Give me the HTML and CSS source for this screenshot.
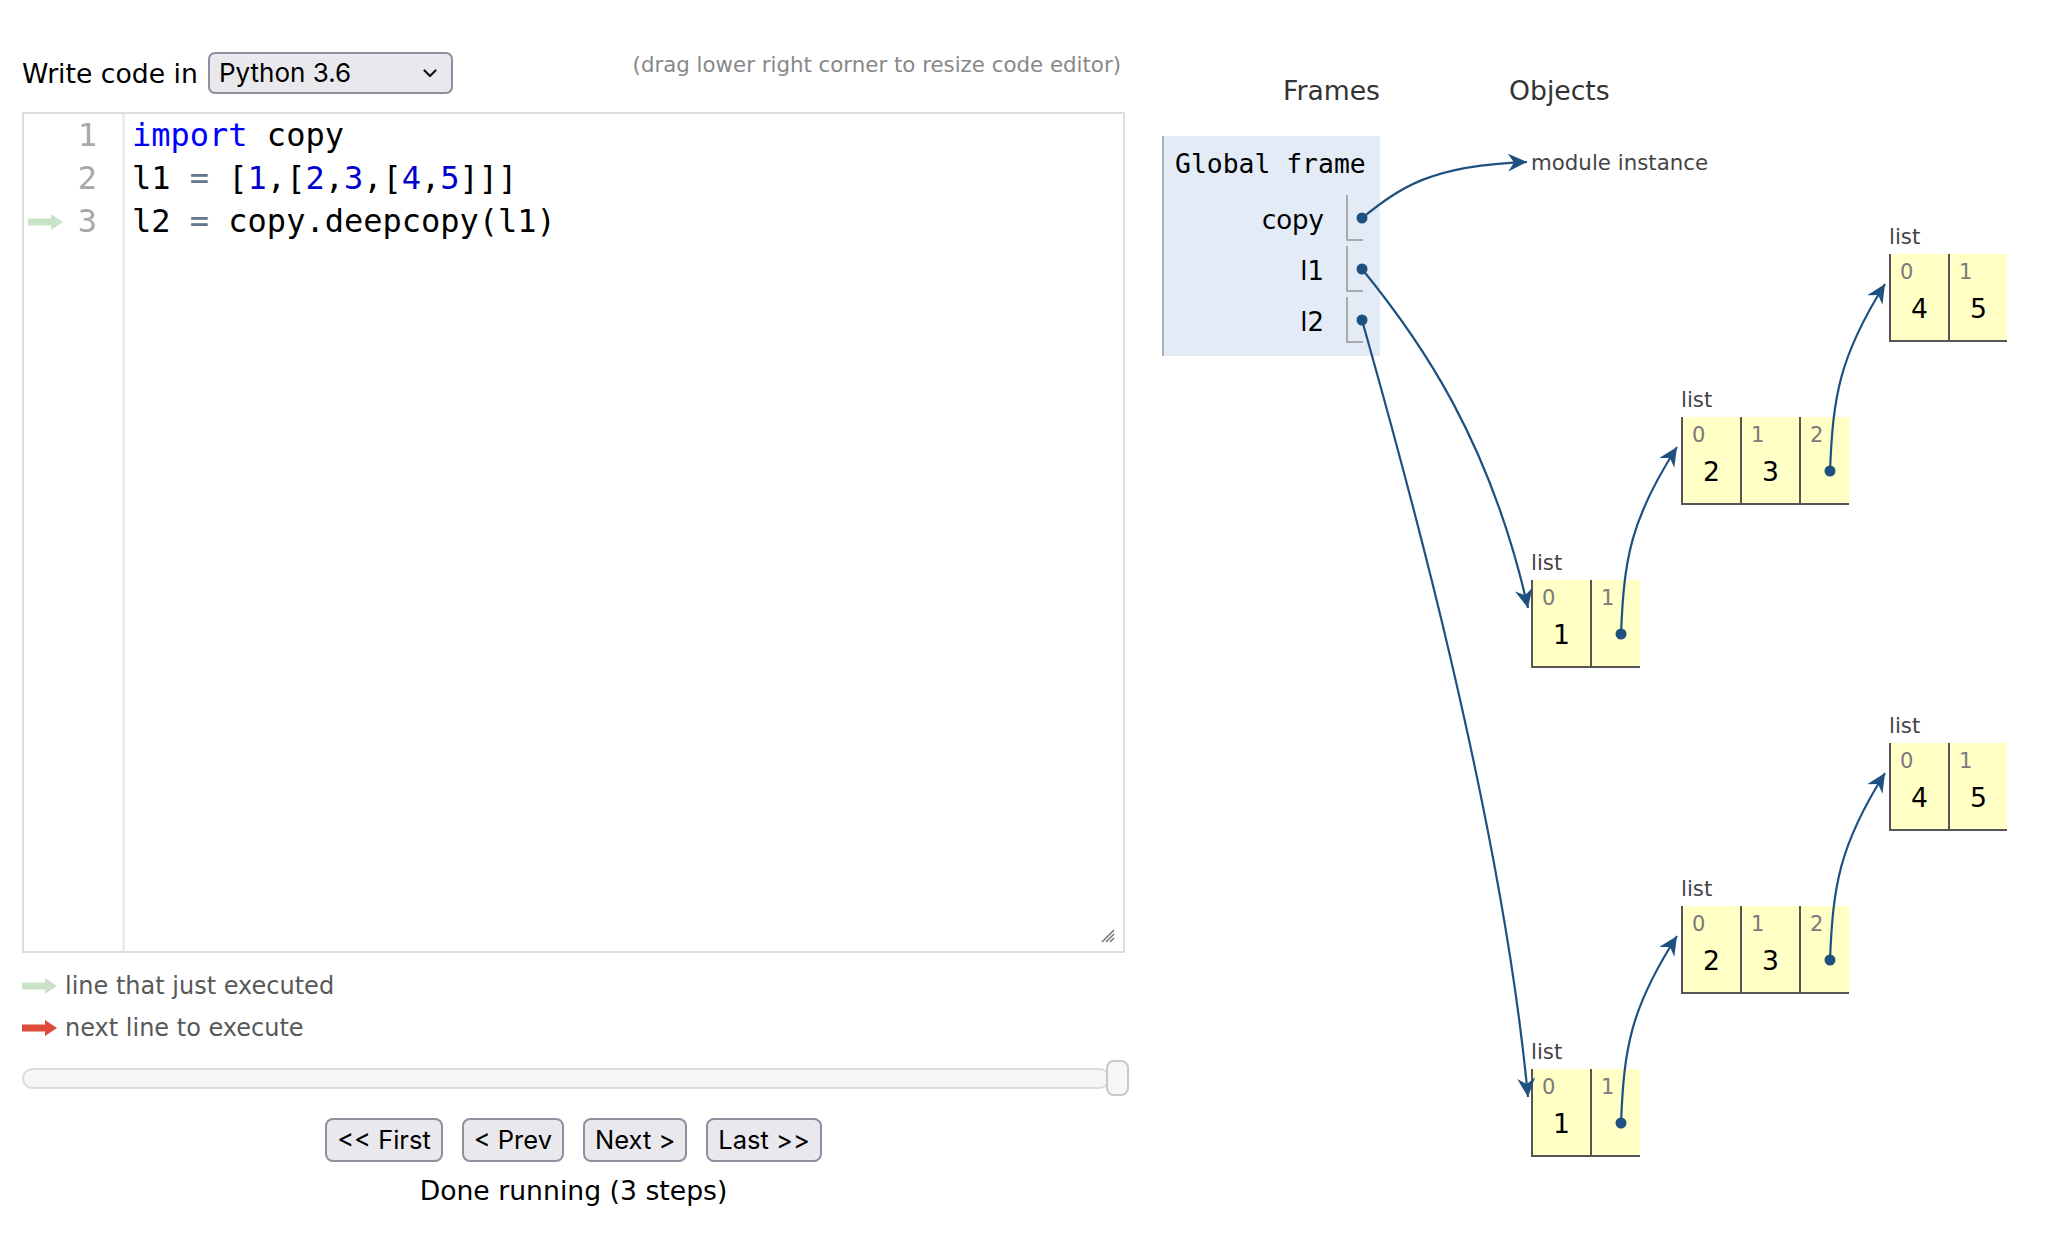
FILE: index.html
```html
<!DOCTYPE html>
<html lang="en">
<head>
<meta charset="utf-8">
<title>Python Tutor - Visualize code</title>
<link rel="stylesheet" href="styles.css">
</head>
<body>
<div class="page">
  <div class="left">
    <div class="lang-row">
      <span class="lang-label">Write code in</span>
      <div class="select">
        <span>Python 3.6</span>
        <svg class="chev" width="14" height="9" viewBox="0 0 14 9"><polyline points="1.5,1.5 7,7 12.5,1.5" fill="none" stroke="#111" stroke-width="2.2" stroke-linecap="round" stroke-linejoin="round"/></svg>
      </div>
      <span class="drag-hint">(drag lower right corner to resize code editor)</span>
    </div>

    <div class="editor">
      <div class="gutter">
        <div class="gline"><span class="num">1</span></div>
        <div class="gline"><span class="num">2</span></div>
        <div class="gline"><svg class="garrow" width="35" height="16" viewBox="0 0 35 16"><rect x="0" y="4.5" width="24" height="7" fill="#c9e3c8"/><polygon points="23,0 35,8 23,16" fill="#c9e3c8"/></svg><span class="num">3</span></div>
      </div>
      <div class="code">
        <div class="cline"><span class="kw">import</span> copy</div>
        <div class="cline">l1 <span class="op">=</span> [<span class="nm">1</span>,[<span class="nm">2</span>,<span class="nm">3</span>,[<span class="nm">4</span>,<span class="nm">5</span>]]]</div>
        <div class="cline">l2 <span class="op">=</span> copy.deepcopy(l1)</div>
      </div>
      <svg class="resize" width="16" height="16" viewBox="0 0 16 16">
        <line x1="15" y1="3" x2="3" y2="15" stroke="#777" stroke-width="1.6"/>
        <line x1="15" y1="7" x2="7" y2="15" stroke="#777" stroke-width="1.6"/>
        <line x1="15" y1="11" x2="11" y2="15" stroke="#777" stroke-width="1.6"/>
      </svg>
    </div>

    <div class="legend">
      <div class="legend-row"><svg width="35" height="16" viewBox="0 0 35 16"><rect x="0" y="4.5" width="24" height="7" fill="#c9e3c8"/><polygon points="23,0 35,8 23,16" fill="#c9e3c8"/></svg><span>line that just executed</span></div>
      <div class="legend-row"><svg width="35" height="16" viewBox="0 0 35 16"><rect x="0" y="4.5" width="24" height="7" fill="#de4b3b"/><polygon points="23,0 35,8 23,16" fill="#de4b3b"/></svg><span>next line to execute</span></div>
    </div>

    <div class="slider">
      <div class="track"></div>
      <div class="thumb"></div>
    </div>

    <div class="buttons">
      <button class="btn">&lt;&lt; First</button>
      <button class="btn">&lt; Prev</button>
      <button class="btn">Next &gt;</button>
      <button class="btn">Last &gt;&gt;</button>
    </div>
    <div class="status">Done running (3 steps)</div>
  </div>

  <div class="right">
    <div class="viz-headers">
      <div class="frames-h">Frames</div>
      <div class="objects-h">Objects</div>
    </div>
    <div class="viz-body">
      <div class="stack">
        <div class="frame">
          <div class="frame-head">Global frame</div>
          <div class="vars">
            <div class="var-row"><span class="var-name">copy</span><span class="var-val"></span></div>
            <div class="var-row"><span class="var-name">l1</span><span class="var-val"></span></div>
            <div class="var-row"><span class="var-name">l2</span><span class="var-val"></span></div>
          </div>
        </div>
      </div>
      <div class="heap">
        <div class="node module n-mod">module instance</div>

        <div class="node n-a3">
          <div class="type-label">list</div>
          <div class="listbox">
            <div class="cell"><span class="idx">0</span><span class="val">4</span></div>
            <div class="cell"><span class="idx">1</span><span class="val">5</span></div>
          </div>
        </div>
        <div class="node n-a2">
          <div class="type-label">list</div>
          <div class="listbox">
            <div class="cell"><span class="idx">0</span><span class="val">2</span></div>
            <div class="cell"><span class="idx">1</span><span class="val">3</span></div>
            <div class="cell ptr"><span class="idx">2</span></div>
          </div>
        </div>
        <div class="node n-a1">
          <div class="type-label">list</div>
          <div class="listbox">
            <div class="cell"><span class="idx">0</span><span class="val">1</span></div>
            <div class="cell ptr"><span class="idx">1</span></div>
          </div>
        </div>

        <div class="node n-b3">
          <div class="type-label">list</div>
          <div class="listbox">
            <div class="cell"><span class="idx">0</span><span class="val">4</span></div>
            <div class="cell"><span class="idx">1</span><span class="val">5</span></div>
          </div>
        </div>
        <div class="node n-b2">
          <div class="type-label">list</div>
          <div class="listbox">
            <div class="cell"><span class="idx">0</span><span class="val">2</span></div>
            <div class="cell"><span class="idx">1</span><span class="val">3</span></div>
            <div class="cell ptr"><span class="idx">2</span></div>
          </div>
        </div>
        <div class="node n-b1">
          <div class="type-label">list</div>
          <div class="listbox">
            <div class="cell"><span class="idx">0</span><span class="val">1</span></div>
            <div class="cell ptr"><span class="idx">1</span></div>
          </div>
        </div>
      </div>
    </div>
  </div>

  <svg class="arrows" width="2070" height="1244" viewBox="0 0 2070 1244">
    <defs>
      <marker id="ah" markerUnits="userSpaceOnUse" markerWidth="22" markerHeight="20" refX="19" refY="9" orient="auto">
        <path d="M0,0 L19,9 L0,18 L6,9 Z" fill="#1f5180"/>
      </marker>
    </defs>
    <g fill="none" stroke="#1f5180" stroke-width="2.2">
      <path d="M1362,218 C1400,188 1430,165 1527,162" marker-end="url(#ah)"/>
      <path d="M1362,269 C1420,340 1490,440 1528,608" marker-end="url(#ah)"/>
      <path d="M1362,320 C1390,420 1500,800 1528,1097" marker-end="url(#ah)"/>
      <path d="M1621,634 C1624,560 1630,520 1677,447" marker-end="url(#ah)"/>
      <path d="M1830,471 C1833,397 1839,357 1885,284" marker-end="url(#ah)"/>
      <path d="M1621,1123 C1624,1049 1630,1009 1677,936" marker-end="url(#ah)"/>
      <path d="M1830,960 C1833,886 1839,846 1885,773" marker-end="url(#ah)"/>
    </g>
    <g fill="#1f5180">
      <circle cx="1362" cy="218" r="5.5"/>
      <circle cx="1362" cy="269" r="5.5"/>
      <circle cx="1362" cy="320" r="5.5"/>
      <circle cx="1621" cy="634" r="5.5"/>
      <circle cx="1830" cy="471" r="5.5"/>
      <circle cx="1621" cy="1123" r="5.5"/>
      <circle cx="1830" cy="960" r="5.5"/>
    </g>
  </svg>
</div>
</body>
</html>
```
FILE: styles.css
```css
* { box-sizing: border-box; }

body {
  margin: 0;
  background: #fff;
  color: #000;
  font-family: "DejaVu Sans", Verdana, sans-serif;
}

.page {
  position: relative;
  width: 2070px;
  height: 1244px;
  display: flex;
  align-items: flex-start;
  overflow: hidden;
}

/* ---------- left column ---------- */
.left {
  margin-left: 22px;
  width: 1107px;
  padding-top: 52px;
  display: flex;
  flex-direction: column;
}

.lang-row {
  display: flex;
  align-items: center;
  width: 1103px;
  height: 42px;
}

.lang-label {
  font-size: 26.67px;
  line-height: 31px;
}

.select {
  margin-left: 10px;
  width: 245px;
  height: 42px;
  border: 2px solid #8f8f9d;
  border-radius: 7px;
  background: #e9e9ed;
  display: flex;
  align-items: center;
  justify-content: space-between;
  padding: 0 14px 0 9px;
  font-family: Inter, "Noto Sans", sans-serif;
  font-size: 26px;
  line-height: 30px;
}

.chev { display: block; }

.drag-hint {
  margin-left: auto;
  margin-right: 4px;
  align-self: flex-start;
  font-size: 21.33px;
  line-height: 25px;
  color: #888;
}

.editor {
  position: relative;
  margin-top: 18px;
  width: 1103px;
  height: 841px;
  border: 2px solid #ddd;
  display: flex;
}

.gutter {
  width: 101px;
  border-right: 3px solid #ececec;
}

.gline {
  height: 43px;
  display: flex;
  align-items: center;
  justify-content: flex-end;
  padding: 0 25px 0 4px;
  font-family: "DejaVu Sans Mono", monospace;
  font-size: 32px;
  line-height: 43px;
  color: #a8a8a8;
}

.garrow { margin-right: auto; }

.code {
  flex: 1;
  padding-left: 7px;
  font-family: "DejaVu Sans Mono", monospace;
  font-size: 32px;
  line-height: 43px;
}

.cline {
  height: 43px;
  white-space: pre;
}

.kw { color: #0000ff; }
.nm { color: #0000cd; }
.op { color: #687687; }

.resize {
  position: absolute;
  right: 8px;
  bottom: 8px;
}

.legend { margin-top: 12px; }

.legend-row {
  height: 42px;
  display: flex;
  align-items: center;
  font-size: 24px;
  color: #585858;
}

.legend-row svg { margin-right: 8px; flex: none; }

.slider {
  margin-top: 11px;
  height: 36px;
  display: flex;
  align-items: center;
}

.track {
  width: 1088px;
  height: 21px;
  border: 2px solid #dcdcdc;
  border-radius: 11px;
  background: #f6f6f6;
}

.thumb {
  width: 23px;
  height: 36px;
  margin-left: -4px;
  border: 2px solid #c9c9c9;
  border-radius: 8px;
  background: #f7f7f7;
}

.buttons {
  margin-top: 22px;
  width: 1103px;
  display: flex;
  justify-content: center;
  gap: 19px;
}

.btn {
  height: 44px;
  padding: 0 10px;
  border: 2px solid #8f8f9d;
  border-radius: 8px;
  background: #e9e9ed;
  color: #000;
  font-family: Inter, "Noto Sans", sans-serif;
  font-size: 25.5px;
  line-height: 38px;
}

.status {
  margin-top: 13px;
  width: 1103px;
  text-align: center;
  font-size: 26.67px;
  line-height: 32px;
}

/* ---------- right: visualization ---------- */
.right {
  margin-left: 33px;
  width: 908px;
}

.viz-headers {
  margin-top: 75px;
  display: flex;
  height: 32px;
  font-size: 26.67px;
  line-height: 32px;
  color: #333;
}

.frames-h {
  width: 218px;
  text-align: right;
}

.objects-h { margin-left: 129px; }

.viz-body {
  margin-top: 29px;
  display: flex;
  align-items: flex-start;
}

.stack { width: 218px; }

.frame {
  height: 220px;
  background: #e2ebf6;
  border-left: 2px solid #a6b0b6;
  padding: 13px 15px 0 11px;
}

.frame-head {
  font-family: "DejaVu Sans Mono", monospace;
  font-size: 26.4px;
  line-height: 30px;
  white-space: nowrap;
}

.vars {
  margin-top: 16px;
  margin-right: 2px;
  display: flex;
  flex-direction: column;
  gap: 5px;
}

.var-row {
  display: flex;
  justify-content: flex-end;
  height: 46px;
}

.var-name {
  margin-right: 22px;
  height: 46px;
  font-size: 26px;
  line-height: 50px;
}

.var-val {
  width: 17px;
  height: 46px;
  border-left: 2px solid #aaa;
  border-bottom: 2px solid #aaa;
}

.heap {
  position: relative;
  flex: 1;
  height: 1108px;
}

.node { position: absolute; }

.module {
  font-size: 21.33px;
  line-height: 24px;
  color: #444;
  white-space: nowrap;
}

.n-mod { left: 151px; top: 15px; }
.n-a3 { left: 509px; top: 89px; }
.n-a2 { left: 301px; top: 252px; }
.n-a1 { left: 151px; top: 415px; }
.n-b3 { left: 509px; top: 578px; }
.n-b2 { left: 301px; top: 741px; }
.n-b1 { left: 151px; top: 904px; }

.type-label {
  height: 24px;
  margin-bottom: 5px;
  font-size: 21.33px;
  line-height: 24px;
  color: #444;
}

.listbox {
  display: flex;
  background: #ffffc6;
}

.cell {
  width: 59px;
  height: 88px;
  border-left: 2px solid #555;
  border-bottom: 2px solid #555;
  display: flex;
  flex-direction: column;
  padding-left: 9px;
}

.cell.ptr { width: 50px; }

.idx {
  margin-top: 7px;
  height: 23px;
  font-size: 21px;
  line-height: 23px;
  color: #7a7a7a;
}

.val {
  margin-top: 9px;
  margin-left: -9px;
  height: 32px;
  text-align: center;
  font-size: 26.67px;
  line-height: 32px;
}

.arrows {
  position: absolute;
  left: 0;
  top: 0;
  pointer-events: none;
}
```
